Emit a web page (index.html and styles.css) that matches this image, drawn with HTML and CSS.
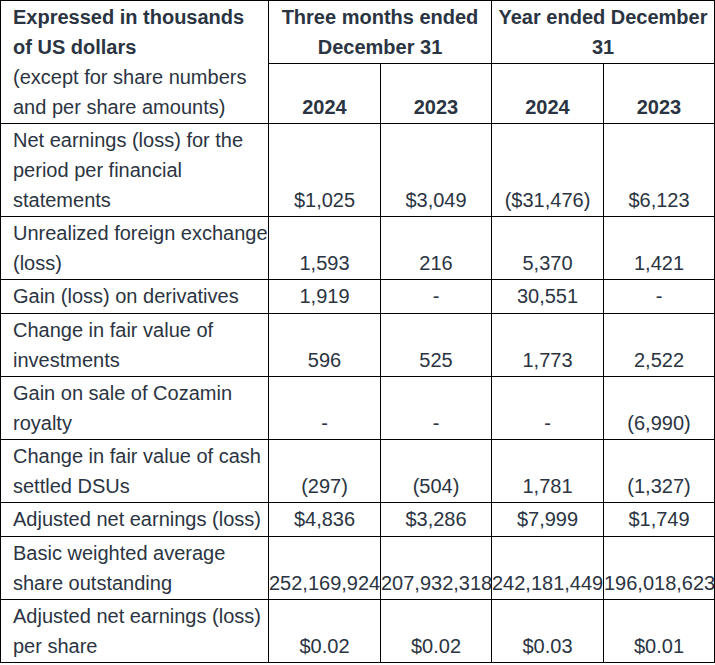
FILE: index.html
```html
<!DOCTYPE html>
<html lang="en">
<head>
<meta charset="utf-8">
<title>Adjusted net earnings</title>
<link rel="stylesheet" href="styles.css">
</head>
<body>
<table class="fin">
  <colgroup>
    <col class="c-label">
    <col class="c-num">
    <col class="c-num2">
    <col class="c-num">
    <col class="c-num2">
  </colgroup>
  <thead>
    <tr class="groups">
      <th rowspan="2" class="label head-label"><strong>Expressed in thousands of US dollars</strong><br><span class="normal">(except for share numbers and per share amounts)</span></th>
      <th colspan="2" class="group">Three months ended December 31</th>
      <th colspan="2" class="group">Year ended December 31</th>
    </tr>
    <tr class="years">
      <th>2024</th>
      <th>2023</th>
      <th>2024</th>
      <th>2023</th>
    </tr>
  </thead>
  <tbody>
    <tr><td class="label">Net earnings (loss) for the period per financial statements</td><td>$1,025</td><td>$3,049</td><td>($31,476)</td><td>$6,123</td></tr>
    <tr><td class="label">Unrealized foreign exchange (loss)</td><td>1,593</td><td>216</td><td>5,370</td><td>1,421</td></tr>
    <tr class="single"><td class="label">Gain (loss) on derivatives</td><td>1,919</td><td>-</td><td>30,551</td><td>-</td></tr>
    <tr><td class="label">Change in fair value of investments</td><td>596</td><td>525</td><td>1,773</td><td>2,522</td></tr>
    <tr><td class="label">Gain on sale of Cozamin royalty</td><td>-</td><td>-</td><td>-</td><td>(6,990)</td></tr>
    <tr><td class="label">Change in fair value of cash settled DSUs</td><td>(297)</td><td>(504)</td><td>1,781</td><td>(1,327)</td></tr>
    <tr class="single"><td class="label">Adjusted net earnings (loss)</td><td>$4,836</td><td>$3,286</td><td>$7,999</td><td>$1,749</td></tr>
    <tr><td class="label">Basic weighted average share outstanding</td><td>252,169,924</td><td>207,932,318</td><td>242,181,449</td><td>196,018,623</td></tr>
    <tr><td class="label">Adjusted net earnings (loss) per share</td><td>$0.02</td><td>$0.02</td><td>$0.03</td><td>$0.01</td></tr>
  </tbody>
</table>
</body>
</html>
```

FILE: styles.css
```css
html, body {
  margin: 0;
  padding: 0;
  background: #ffffff;
}

.fin {
  border-collapse: collapse;
  table-layout: fixed;
  width: 714px;
  font-family: "Liberation Sans", Arial, sans-serif;
  font-size: 20px;
  line-height: 30px;
  color: #2b3442;
}

.c-label { width: 268px; }
.c-num { width: 112px; }
.c-num2 { width: 111px; }

.fin th,
.fin td {
  border: 1px solid #000000;
  padding: 1px 0;
  text-align: center;
  vertical-align: bottom;
  white-space: nowrap;
}

.fin th {
  font-weight: bold;
}

.fin .groups .group {
  height: 60px;
  vertical-align: top;
  white-space: normal;
}

.fin .label {
  text-align: left;
  padding-left: 12px;
  padding-right: 0;
  white-space: normal;
}

.fin .head-label {
  vertical-align: top;
}

.fin .head-label .normal {
  font-weight: normal;
}

.fin .single td {
  padding-bottom: 2px;
}
```
